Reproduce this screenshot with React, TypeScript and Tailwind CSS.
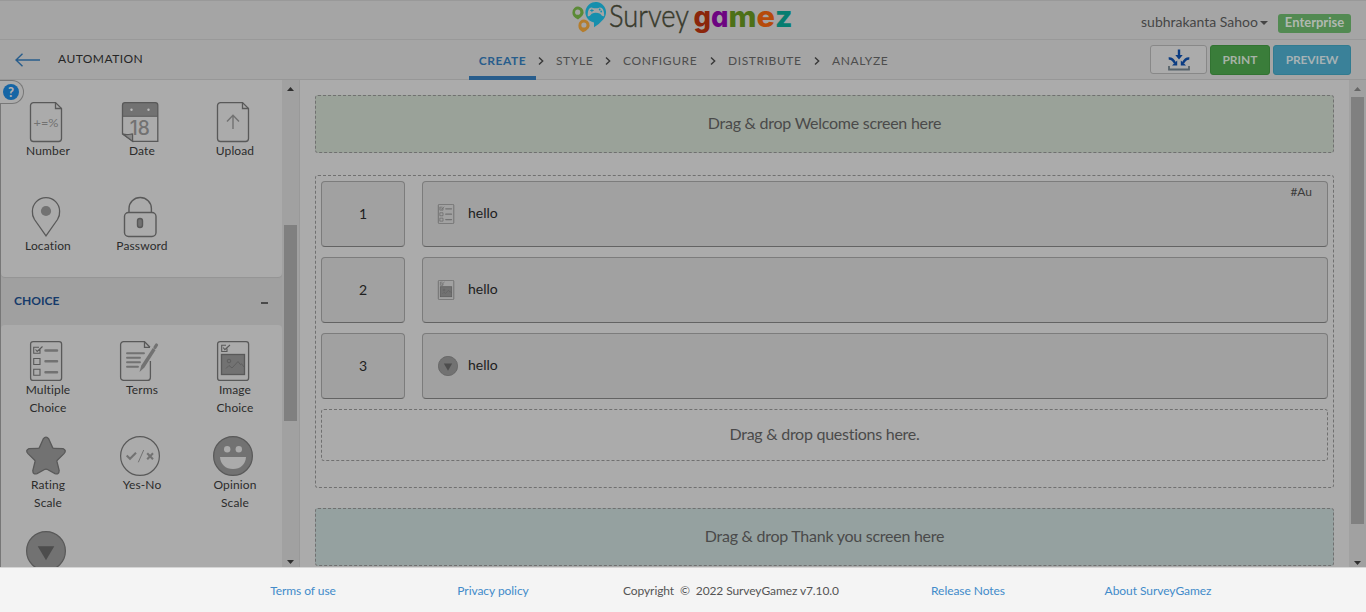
import React from "react";

const ICON = "block h-10 w-10 overflow-visible";
const LINE = "#595959";
const FILL = "#727272";

function Page({ children, right = 35.5 }: { children?: React.ReactNode; right?: number }) {
  const d = `M7.5 .6H${right - 6}L${right} 6.5V36.5a3 3 0 0 1-3 3H7.5a3 3 0 0 1-3-3V3.6a3 3 0 0 1 3-3Z`;
  return (
    <svg viewBox="0 0 40 40" className={ICON} fill="none" stroke={LINE} strokeWidth="1.3">
      <path d={d} />
      <path d={`M${right - 6} .6V6.5H${right}`} />
      {children}
    </svg>
  );
}

function NumberIcon() {
  return (
    <Page>
      <text x="7.5" y="24.5" fontSize="12" fontFamily="Lato, sans-serif" fill={FILL} stroke="none" textLength="25" lengthAdjust="spacingAndGlyphs">
        +=%
      </text>
    </Page>
  );
}

function DateIcon() {
  return (
    <svg viewBox="0 0 40 40" className={ICON}>
      <path d="M2.5 14V3.2A2.6 2.6 0 0 1 5 .6H35.2A2.6 2.6 0 0 1 37.8 3.2V14Z" fill={FILL} />
      <path d="M2.5 32V3.2A2.6 2.6 0 0 1 5 .6H35.2A2.6 2.6 0 0 1 37.8 3.2V39.4H13L2.5 32Z" fill="none" stroke={LINE} strokeWidth="1.3" />
      <path d="M2.5 14.3H37.8" stroke={LINE} />
      <path d="M2.5 31.8C8 34 11 31.5 12.6 32V39.2Z" fill="#8a8a8a" stroke={LINE} strokeWidth="1.2" />
      <circle cx="11.5" cy="7.8" r="1.2" fill="#bbb" />
      <circle cx="28.5" cy="7.8" r="1.2" fill="#bbb" />
      <text x="9.8" y="32.7" fontSize="19.5" fontFamily="Inter, sans-serif" fontWeight="500" fill={FILL} textLength="20" lengthAdjust="spacingAndGlyphs">
        18
      </text>
    </svg>
  );
}

function UploadIcon() {
  return (
    <Page>
      <path d="M20 27V13.5M14 19.5L20 13.3L26 19.5" stroke={FILL} strokeWidth="1.4" />
    </Page>
  );
}

function LocationIcon() {
  return (
    <svg viewBox="0 0 40 40" className={ICON}>
      <path d="M20 38.8L8.5 22.5A13.4 13.4 0 0 1 6.4 14.2A13.6 13.6 0 0 1 33.6 14.2A13.4 13.4 0 0 1 31.5 22.5Z" fill="none" stroke={LINE} strokeWidth="1.3" />
      <circle cx="20" cy="14" r="5.1" fill={FILL} />
    </svg>
  );
}

function PasswordIcon() {
  return (
    <svg viewBox="0 0 40 40" className={ICON} fill="none" stroke={LINE} strokeWidth="1.4">
      <rect x="4.5" y="15.5" width="31.5" height="24" rx="4" />
      <path d="M9 15.5V11.5a11.2 11 0 0 1 22.4 0V15.5" />
      <rect x="17.5" y="21.5" width="5" height="9" rx="2.5" fill={FILL} />
    </svg>
  );
}

function MultipleIcon({ className = ICON }: { className?: string }) {
  return (
    <svg viewBox="0 0 40 40" className={className} fill="none" stroke={LINE} strokeWidth="1.3">
      <rect x="4.6" y=".6" width="31" height="38.8" rx="2.5" />
      <path d="M14 8V12.3H7.7V6.3H13M9.5 8.5L11.2 10.5L16.5 5.5M7.7 17.5H14V23.5H7.7ZM7.7 28.3H14V34.3H7.7Z" strokeWidth="1.1" />
      <path d="M19.5 9.5H31M19.5 20.3H31M19.5 31.2H31" stroke={FILL} strokeWidth="2.5" strokeLinecap="round" />
    </svg>
  );
}

function TermsIcon() {
  return (
    <svg viewBox="0 0 40 40" className={ICON} fill="none" stroke={LINE} strokeWidth="1.3">
      <path d="M30.4 20V36.4a3 3 0 0 1-3 3H3.6a3 3 0 0 1-3-3V3.6a3 3 0 0 1 3-3H24.5L30 6.3M24.5 .6V6.3H30" />
      <path d="M7 12.2H24M7 16.7H20M7 21.3H20M7 25.8H18" stroke={FILL} strokeWidth="1.9" strokeLinecap="round" />
      <path d="M32.8 7L35.6 9L24.4 26.5L19.5 31L21.3 24.5Z" fill={FILL} stroke="none" />
      <path d="M35 6.4L36.5 4" stroke={FILL} strokeWidth="3.2" strokeLinecap="round" />
    </svg>
  );
}

function ImageIcon({ className = ICON }: { className?: string }) {
  return (
    <svg viewBox="0 0 40 40" className={className} fill="none" stroke={LINE} strokeWidth="1.3">
      <rect x="4.6" y=".6" width="31" height="38.8" rx="2.5" />
      <path d="M14 7.5V10.5H8.7V4.3H13M10.2 6.5L11.8 8.6L17 4" strokeWidth="1.1" />
      <rect x="8.5" y="13.5" width="23" height="20" fill={FILL} />
      <circle cx="16" cy="20" r="1.8" strokeWidth=".8" />
      <path d="M13 27.5L16 24.5L19 27L25 20.5L27.5 23.7L28.5 22.8L31 26" strokeWidth=".8" />
    </svg>
  );
}

function StarIcon() {
  return (
    <svg viewBox="0 0 40 40" className={ICON}>
      <path
        d="M17.2 3Q20 -.6 22.8 3L26.6 11.6Q27 12.4 28 12.4L37 12.6Q41 14.4 38 17.6L31.5 24Q30.8 24.7 31 25.7L33.2 34.5Q33 39 29 37.6L21 33.3Q20 32.8 19 33.3L11 37.6Q6.8 39 6.8 34.5L9 25.7Q9.2 24.7 8.5 24L2 17.6Q-1 14.4 3 12.6L12 12.4Q13 12.4 13.4 11.6Z"
        fill={FILL}
        stroke={LINE}
        strokeWidth="1.3"
      />
    </svg>
  );
}

function YesNoIcon() {
  return (
    <svg viewBox="0 0 40 40" className={ICON} fill="none">
      <circle cx="20" cy="20" r="19.4" stroke={LINE} strokeWidth="1.2" />
      <path d="M6.7 19.5L10 22.7L16 16.8M27.2 17.3L33 23.3M33 17.3L27.2 23.3" stroke={FILL} strokeWidth="2.1" />
      <path d="M23.7 14L18.3 26.3" stroke={FILL} strokeWidth="1" />
    </svg>
  );
}

function OpinionIcon() {
  return (
    <svg viewBox="0 0 40 40" className={ICON}>
      <circle cx="20" cy="20" r="19.4" fill={FILL} stroke={LINE} strokeWidth="1.2" />
      <circle cx="14.2" cy="13.2" r="3.2" fill="#ababab" />
      <circle cx="25.8" cy="13.2" r="3.2" fill="#ababab" />
      <path d="M7 21H33C32.5 28.5 27.5 33 20 33S7.5 28.5 7 21Z" fill="#ababab" />
    </svg>
  );
}

function DropdownIcon({ className = ICON }: { className?: string }) {
  return (
    <svg viewBox="0 0 40 40" className={className}>
      <circle cx="20" cy="20" r="19.4" fill={FILL} stroke={LINE} strokeWidth="1.2" />
      <path d="M11.7 15.2H28.3L20 29.3Z" fill="#4d4d4d" />
    </svg>
  );
}

function Tile({ icon, label }: { icon: React.ReactNode; label: React.ReactNode }) {
  return (
    <div className="flex h-[95px] flex-col items-center">
      <div className="mr-1">{icon}</div>
      <div className="text-center text-[12px] leading-[18px] tracking-[0.12px] text-[#2b2b2b]">{label}</div>
    </div>
  );
}

function Arrow({ up, color = "#2f2f2f" }: { up?: boolean; color?: string }) {
  return (
    <svg width="7" height="4" viewBox="0 0 7 4" className="block">
      <path d={up ? "M0 4L3.5 0L7 4Z" : "M0 0L3.5 4L7 0Z"} fill={color} />
    </svg>
  );
}

function Logo() {
  return (
    <svg width="222" height="38" viewBox="0 0 222 38" className="block overflow-visible">
      <g transform="translate(-2.3 -1.8)">
        <path d="M8.3 20.2C4.5 18 2.7 16.5 2.7 13.5A5.6 5.6 0 1 1 13 16Q11.5 18 8.3 20.2Z" fill="#5b8a36" />
        <circle cx="8" cy="13" r="2.6" fill="#a5a5a5" />
        <path d="M13.2 33C10 31 8.7 29.5 8.7 26.5A5.6 5.6 0 1 1 19 29Q17 31.5 13.2 33Z" fill="#b47d2d" />
        <circle cx="14.2" cy="25.8" r="2.6" fill="#a5a5a5" />
        <path d="M24.3 28V23.3A10.3 10.3 0 1 1 33.5 20.2Q30 24.5 24.3 28Z" fill="#168fad" />
        <path d="M18 16.5C18 10.5 20 7.8 22.5 8.5Q26 9.8 29.5 8.5C32.5 7.8 34.5 10.5 34.5 16.5Q33.5 18.5 30.5 14.5Q26 12.5 22 14.5Q19 18.5 18 16.5Z" fill="#a5a5a5" />
        <path d="M20.5 11.3H24M22.2 9.6V13" stroke="#168fad" strokeWidth="1" />
        <circle cx="30" cy="10.3" r=".9" fill="#168fad" />
        <circle cx="31.5" cy="12.3" r=".9" fill="#168fad" />
      </g>
      <text x="37" y="26" fontFamily="Lato, sans-serif" fontWeight="300" fontSize="32" fill="#383a2c" stroke="#383a2c" strokeWidth=".5" textLength="80" lengthAdjust="spacingAndGlyphs">
        Survey
      </text>
      <g fontFamily="Inter, sans-serif" fontWeight="800" fontSize="28.5" style={{ fontFeatureSettings: "'cv11'" }}>
        <text x="121.5" y="26" fill="#8b260b" textLength="17.5" lengthAdjust="spacingAndGlyphs">g</text>
        <text x="139" y="26" fill="#6d0481" textLength="17.5" lengthAdjust="spacingAndGlyphs">a</text>
        <text x="156.5" y="26" fill="#4d7018" textLength="28" lengthAdjust="spacingAndGlyphs">m</text>
        <text x="184.5" y="26" fill="#b64a0a" textLength="18.5" lengthAdjust="spacingAndGlyphs">e</text>
        <text x="203" y="26" fill="#077d70" textLength="17.5" lengthAdjust="spacingAndGlyphs">z</text>
      </g>
    </svg>
  );
}

function Header() {
  return (
    <header className="grid h-10 grid-cols-[572px_222px_1fr] border-y border-[#999] bg-[#a5a5a5]">
      <div />
      <Logo />
      <div className="flex items-start justify-end pr-[15px]">
        <span className="mt-[11px] text-[14px] leading-5 text-[#454545]">subhrakanta Sahoo</span>
        <svg width="8" height="4" viewBox="0 0 8 4" className="mr-[10px] mt-5 ml-[2px]">
          <path d="M0 0H8L4 4Z" fill="#454545" />
        </svg>
        <span className="mt-[13px] flex h-[19px] w-[73px] justify-center rounded-[3px] bg-[#528a52] text-[13px] leading-[16px] font-bold text-[#b0b8b0]">
          Enterprise
        </span>
      </div>
    </header>
  );
}

function Chevron() {
  return (
    <svg width="6" height="8" viewBox="0 0 6 8" className="-ml-px">
      <path d="M1 .5L4.7 4L1 7.5" fill="none" stroke="#383838" strokeWidth="1.4" />
    </svg>
  );
}

const STEP = "flex h-full items-center text-[12px] tracking-[0.6px] text-[#4d4d4d]";

function SubHeader() {
  return (
    <nav className="grid h-10 grid-cols-[469px_1fr_auto] border-b border-[#979797] bg-[#a5a5a5]">
      <div className="flex items-center pl-[15px]">
        <svg width="25" height="14" viewBox="0 0 25 14" fill="none" stroke="#285d8c" strokeWidth="1.4">
          <path d="M1 7H25M7.5 .7L1 7L7.5 13.3" />
        </svg>
        <span className="mb-[2px] ml-[18px] text-[12px] tracking-[0.45px] text-[#252525]">AUTOMATION</span>
      </div>
      <div className="flex items-center">
        <div className="mr-[3px] flex h-10 w-[67px] items-center justify-center border-b-4 border-[#285d8c] pt-[5px] text-[12px] font-bold tracking-[0.6px] text-[#285d8c]">
          CREATE
        </div>
        <div className="flex h-full flex-1 items-center pt-[1px]">
          <Chevron />
          <span className={`${STEP} ml-[12px] w-[50px]`}>STYLE</span>
          <Chevron />
          <span className={`${STEP} ml-[12px] w-[88px]`}>CONFIGURE</span>
          <Chevron />
          <span className={`${STEP} ml-[12px] w-[87px]`}>DISTRIBUTE</span>
          <Chevron />
          <span className={`${STEP} ml-[12px]`}>ANALYZE</span>
        </div>
      </div>
      <div className="flex gap-[3px] pt-[5px] pr-[15px]">
        <button className="flex h-[29px] w-[57px] items-center justify-center rounded-[3px] border border-[#888] bg-[#ababab]">
          <svg width="22" height="22" viewBox="0 0 22 22" fill="none" stroke="#0b3c83" strokeWidth="2.4">
            <path d="M11 0.5V8M0.7 9.5C4 9.2 5.5 11 7 14M21.3 9.5C18 9.2 16.5 11 15 14" />
            <path d="M7.3 6H14.7L11 10.5ZM9.2 11.5V16.5H4ZM12.8 11.5V16.5H18Z" fill="#0b3c83" stroke="none" />
            <path d="M1 17V20.5H21V17" stroke="#57636b" strokeWidth="1.8" />
          </svg>
        </button>
        <button className="h-[30px] w-[60px] rounded-[3px] border border-[#327332] bg-[#3a7d3a] text-[12px] font-bold text-[#a6b2a6]">PRINT</button>
        <button className="h-[30px] w-[78px] rounded-[3px] border border-[#317b90] bg-[#3a8199] text-[12px] font-bold tracking-[-0.1px] text-[#a6b2b5]">PREVIEW</button>
      </div>
    </nav>
  );
}

function Sidebar() {
  return (
    <aside className="relative flex w-[300px] shrink-0 border-r border-l border-r-[#999] border-l-[#777]">
      <div className="h-[488px] w-[281px] overflow-hidden bg-[#a0a0a0]">
        <div className="grid h-[197px] grid-cols-[94px_94px_92px] rounded-b-[4px] bg-[#ababab] pt-[22px] shadow-[0_1px_1px_#949494]">
          <Tile icon={<NumberIcon />} label="Number" />
          <Tile icon={<DateIcon />} label="Date" />
          <Tile icon={<UploadIcon />} label="Upload" />
          <Tile icon={<LocationIcon />} label="Location" />
          <Tile icon={<PasswordIcon />} label="Password" />
        </div>
        <div className="flex h-12 items-center justify-between pr-[14px] pl-[13px] text-[12px] font-bold text-[#163b6b]">
          <span>CHOICE</span>
          <span className="mt-[3px] h-[2px] w-[7px] bg-[#4a4a4a]" />
        </div>
        <div className="grid grid-cols-[94px_94px_92px] rounded-t-[4px] bg-[#ababab] pt-4">
          <Tile icon={<MultipleIcon />} label={<>Multiple<br />Choice</>} />
          <Tile icon={<TermsIcon />} label="Terms" />
          <Tile icon={<ImageIcon />} label={<>Image<br />Choice</>} />
          <Tile icon={<StarIcon />} label={<>Rating<br />Scale</>} />
          <Tile icon={<YesNoIcon />} label="Yes-No" />
          <Tile icon={<OpinionIcon />} label={<>Opinion<br />Scale</>} />
          <Tile icon={<DropdownIcon />} label="" />
        </div>
      </div>
      <div className="flex w-[17px] flex-col items-center bg-[#a1a1a1] pt-[7px] pb-[3px]">
        <Arrow up />
        <div className="mt-[134px] h-[196px] w-[13px] bg-[#808080]" />
        <div className="mt-auto"><Arrow /></div>
      </div>
      <div className="absolute top-0 -left-px flex h-6 w-6 items-center rounded-r-full border border-l-0 border-[#777] bg-[#ababab] pl-[3px]">
        <span className="flex h-4 w-4 items-center justify-center rounded-full bg-[#1565a5] text-[13px] leading-none font-black text-[#b0b0b0]">?</span>
      </div>
    </aside>
  );
}

const BOX = "h-[66px] rounded-[4px] border border-[#7c7c7c] border-b-[#636363] bg-[#a1a1a1] text-[#202020]";

function Question({ n, icon, tag }: { n: number; icon: React.ReactNode; tag?: string }) {
  return (
    <div className="flex gap-[17px]">
      <div className={`${BOX} flex w-[84px] items-center justify-center pb-[2px] text-[14px]`}>{n}</div>
      <div className={`${BOX} flex flex-1 items-center pl-[15px]`}>
        <div className="w-[30px]">{icon}</div>
        <span className="mb-[3px] flex-1 text-[14px]">hello</span>
        {tag && <span className="mt-[2px] mr-[15px] self-start text-[12px] leading-[15px] text-[#3c3c3c]">{tag}</span>}
      </div>
    </div>
  );
}

const DROP = "flex items-center justify-center rounded-[3px] border border-dashed border-[#707070] pb-[2px] text-[16px] tracking-[-0.26px] text-[#4a4a4a]";

function Builder() {
  return (
    <main className="flex flex-1">
      <div className="flex-1 pt-[15px] pr-[15px] pl-[15px]">
        <div className={`${DROP} h-[58px] bg-[#9aa299]`}>Drag &amp; drop Welcome screen here</div>
        <div className="mt-[22px] flex h-[313px] flex-col gap-[10px] rounded-[3px] border border-dashed border-[#707070] p-[5px]">
          <Question n={1} tag="#Au" icon={<MultipleIcon className="-ml-[2px] block h-5 w-5" />} />
          <Question n={2} icon={<ImageIcon className="-ml-[2px] block h-5 w-5" />} />
          <Question n={3} icon={<DropdownIcon className="block h-5 w-5" />} />
          <div className={`${DROP} h-[52px]`}>Drag &amp; drop questions here.</div>
        </div>
        <div className={`${DROP} mt-5 h-[58px] bg-[#95a1a0]`}>Drag &amp; drop Thank you screen here</div>
      </div>
      <div className="flex w-[17px] flex-col items-center bg-[#a1a1a1] pt-[7px] pb-[2px]">
        <Arrow up color="#666" />
        <div className="mt-[6px] h-[427px] w-[13px] bg-[#808080]" />
        <div className="mt-auto"><Arrow /></div>
      </div>
    </main>
  );
}

function Footer() {
  return (
    <footer className="grid h-[45px] grid-cols-[190px_190px_286px_188px_192px] border-t border-[#d5d5d5] bg-[#f4f4f4] pl-[208px] text-center text-[12px] leading-[46px] tracking-[-0.06px] whitespace-nowrap text-[#428bca]">
      <a>Terms of use</a>
      <a>Privacy policy</a>
      <span className="tracking-[-0.1px] text-[#555]">Copyright&nbsp; ©&nbsp; 2022 SurveyGamez v7.10.0</span>
      <a>Release Notes</a>
      <a>About SurveyGamez</a>
    </footer>
  );
}

export default function App() {
  return (
    <div className="h-[612px] w-[1366px] overflow-hidden bg-[#ababab] font-['Lato',sans-serif]">
      <Header />
      <SubHeader />
      <div className="flex h-[487px] overflow-hidden">
        <Sidebar />
        <Builder />
      </div>
      <Footer />
    </div>
  );
}
